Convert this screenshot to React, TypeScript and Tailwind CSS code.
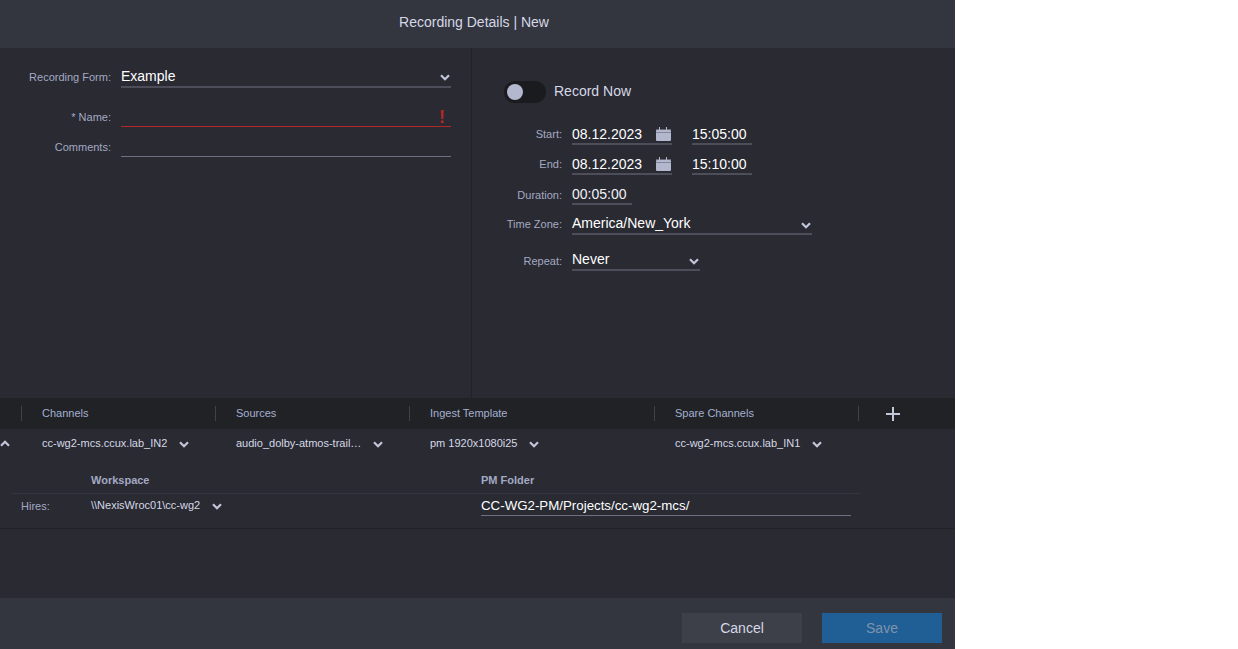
function Chevron({ className = '' }: { className?: string }) {
  return (
    <svg width="10" height="7" viewBox="0 0 10 7" className={`shrink-0 ${className}`}>
      <path d="M1 1.3 L5 5.3 L9 1.3" fill="none" stroke="#c3c7da" strokeWidth="2.2" />
    </svg>
  )
}

function PlusIcon() {
  return (
    <svg width="14" height="14" viewBox="0 0 14 14" className="ml-[27px] shrink-0">
      <rect x="0" y="6" width="14" height="2" fill="#c3c7da" />
      <rect x="6" y="0" width="2" height="14" fill="#c3c7da" />
    </svg>
  )
}

function CalendarIcon() {
  return (
    <svg width="15" height="15" viewBox="0 0 15 15" className="shrink-0">
      <rect x="0" y="3" width="15" height="11" rx="1" fill="#b4b8cf" />
      <rect x="0" y="2" width="15" height="1" fill="#b4b8cf" opacity="0.45" />
      <rect x="0" y="5" width="15" height="1" fill="#292a32" opacity="0.35" />
      <rect x="3" y="0" width="1" height="4" fill="#b4b8cf" />
      <rect x="10" y="0" width="1" height="4" fill="#b4b8cf" />
    </svg>
  )
}

function FormLabel({ children, className }: { children: React.ReactNode; className: string }) {
  return <span className={`shrink-0 text-right text-[11px] text-[#a4a9c3] ${className}`}>{children}</span>
}

function TimeRow({ label, date, time }: { label: string; date: string; time: string }) {
  return (
    <div className="flex h-[30px] items-center gap-[10px]">
      <FormLabel className="w-[58px] pt-[8px]">{label}</FormLabel>
      <div className="flex h-[30px] w-[100px] items-center justify-between border-b-2 border-[#4d4e5a] pr-[1px] pt-[11px] text-[14px] text-white">
        {date}
        <CalendarIcon />
      </div>
      <div className="ml-[10px] flex h-[30px] w-[60px] items-center border-b-2 border-[#4d4e5a] pt-[11px] text-[14px] text-white">
        {time}
      </div>
    </div>
  )
}

function ColDivider() {
  return <span className="h-[15px] w-[1px] shrink-0 bg-[#3f414b]" />
}

function TableCell({ text, width }: { text: string; width: string }) {
  return (
    <div className={`${width} flex shrink-0 items-center pl-[21px]`}>
      <span className="whitespace-nowrap text-[11px] text-[#d5d8e6]">{text}</span>
      <Chevron className="ml-[12px] mt-[2px]" />
    </div>
  )
}

export default function App() {
  return (
    <div className="h-[649px] w-[1238px] overflow-hidden bg-white font-['Liberation_Sans',sans-serif]">
      <div className="flex h-[649px] w-[955px] flex-col bg-[#292a32]">
        <header className="flex h-[48px] shrink-0 items-center justify-center bg-[#33363e] pb-[4px] pr-[7px] text-[14px] text-[#d5d8e6]">
          Recording Details | New
        </header>

        <div className="flex h-[350px] shrink-0">
          {/* Left form */}
          <div className="w-[472px] shrink-0 border-r border-[#212226] pt-[15px]">
            <div className="flex h-[25px] items-center gap-[10px]">
              <FormLabel className="w-[111px] pt-[4px]">Recording Form:</FormLabel>
              <div className="flex h-[25px] w-[330px] items-center justify-between border-b-2 border-[#4d4e5a] pr-[1px] pt-[3px] text-[14px] text-white">
                Example
                <Chevron className="mt-[2px]" />
              </div>
            </div>
            <div className="mt-[14px] flex h-[25px] items-center gap-[10px]">
              <FormLabel className="w-[111px] pt-[5px]">* Name:</FormLabel>
              <div className="flex h-[25px] w-[330px] items-center justify-end border-b border-b-[#b3272a] pr-[6px] pt-[6px] text-[18px] font-bold text-[#b3272a]">
                !
              </div>
            </div>
            <div className="mt-[5px] flex h-[25px] items-center gap-[10px]">
              <FormLabel className="w-[111px] pt-[5px]">Comments:</FormLabel>
              <div className="h-[25px] w-[330px] border-b border-[#6e7080]" />
            </div>
          </div>

          {/* Right form */}
          <div className="flex-1 pl-[32px] pt-[33px]">
            <div className="flex items-start gap-[8px]">
              <div className="flex h-[22px] w-[42px] items-center rounded-full bg-[#1a1b1f] pl-[3px]">
                <span className="h-[16px] w-[16px] rounded-full bg-[#b4b8cf]" />
              </div>
              <span className="pb-[2px] text-[14px] text-[#d5d8e6]">Record Now</span>
            </div>
            <div className="mt-[11px]">
              <TimeRow label="Start:" date="08.12.2023" time="15:05:00" />
              <TimeRow label="End:" date="08.12.2023" time="15:10:00" />
              <div className="flex h-[30px] items-center gap-[10px]">
                <FormLabel className="w-[58px] pt-[10px]">Duration:</FormLabel>
                <div className="flex h-[30px] w-[60px] items-center border-b-2 border-[#4d4e5a] pt-[11px] text-[14px] text-[#f0f1f6]">
                  00:05:00
                </div>
              </div>
              <div className="flex h-[30px] items-center gap-[10px]">
                <FormLabel className="w-[58px] pt-[8px]">Time Zone:</FormLabel>
                <div className="flex h-[30px] w-[240px] items-center justify-between border-b-2 border-[#4d4e5a] pr-[1px] pt-[8px] text-[14px] text-white">
                  America/New_York
                  <Chevron className="mt-[4px]" />
                </div>
              </div>
              <div className="mt-[6px] flex h-[30px] items-center gap-[10px]">
                <FormLabel className="w-[58px] pt-[10px]">Repeat:</FormLabel>
                <div className="flex h-[30px] w-[128px] items-center justify-between border-b-2 border-[#4d4e5a] pr-[1px] pt-[8px] text-[14px] text-white">
                  Never
                  <Chevron className="mt-[4px]" />
                </div>
              </div>
            </div>
          </div>
        </div>

        {/* Channels table */}
        <div className="flex h-[31px] shrink-0 items-center bg-[#212226] pl-[21px] text-[11px] text-[#a4b0d0]">
          <ColDivider />
          <span className="w-[193px] shrink-0 pl-[20px]">Channels</span>
          <ColDivider />
          <span className="w-[193px] shrink-0 pl-[20px]">Sources</span>
          <ColDivider />
          <span className="w-[244px] shrink-0 pl-[20px]">Ingest Template</span>
          <ColDivider />
          <span className="w-[203px] shrink-0 pl-[20px]">Spare Channels</span>
          <ColDivider />
          <PlusIcon />
        </div>
        <div className="flex h-[29px] shrink-0 items-center">
          <Chevron className="rotate-180" />
          <div className="ml-[11px] flex items-center">
            <TableCell text="cc-wg2-mcs.ccux.lab_IN2" width="w-[194px]" />
            <TableCell text="audio_dolby-atmos-trail…" width="w-[194px]" />
            <TableCell text="pm 1920x1080i25" width="w-[245px]" />
            <TableCell text="cc-wg2-mcs.ccux.lab_IN1" width="w-[204px]" />
          </div>
        </div>

        {/* Hires row */}
        <div className="h-[71px] shrink-0 border-b border-[#212226]">
          <div className="ml-[11px] mt-[6px] flex h-[30px] w-[849px] items-center border-b border-[#33363e] pt-[4px] text-[11px] font-bold text-[#a4a9c3]">
            <span className="ml-[80px] w-[390px]">Workspace</span>
            <span>PM Folder</span>
          </div>
          <div className="ml-[21px] flex items-start text-[11px]">
            <span className="mt-[4px] w-[70px] text-[#a4a9c3]">Hires:</span>
            <div className="mt-[3px] flex w-[390px] items-center">
              <span className="text-[#d5d8e6]">\\NexisWroc01\cc-wg2</span>
              <Chevron className="ml-[12px] mt-[2px]" />
            </div>
            <div className="flex h-[22px] w-[370px] items-center border-b border-[#6e7080] pt-[2px] text-[13.3px] text-white">
              CC-WG2-PM/Projects/cc-wg2-mcs/
            </div>
          </div>
        </div>

        <div className="flex-1" />

        <footer className="flex h-[51px] shrink-0 items-start justify-end gap-[20px] bg-[#33363e] pr-[13px] pt-[15px]">
          <button className="h-[30px] w-[120px] bg-[#3e4049] text-[14px] text-[#d5d8e6]">Cancel</button>
          <button className="h-[30px] w-[120px] bg-[#1f5f96] text-[14px] text-[#7f93aa]">Save</button>
        </footer>
      </div>
    </div>
  )
}
